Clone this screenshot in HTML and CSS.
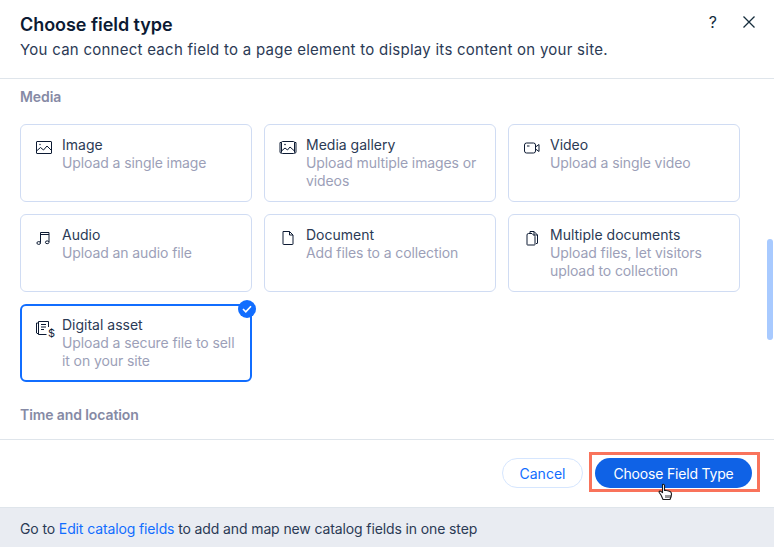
FILE: index.html
```html
<!DOCTYPE html>
<html lang="en">
<head>
<meta charset="utf-8">
<title>Choose field type</title>
<link rel="stylesheet" href="styles.css">
</head>
<body>
<div class="dialog">
  <header class="head">
    <div class="head-text">
      <h1>Choose field type</h1>
      <p>You can connect each field to a page element to display its content on your site.</p>
    </div>
    <div class="head-actions">
      <span class="help">?</span>
      <svg class="close" width="14" height="14" viewBox="0 0 14 14"><path d="M1.5 1.5l11 11M12.5 1.5l-11 11" fill="none" stroke="#162d3d" stroke-width="1.3"/></svg>
    </div>
  </header>
  <main class="body">
    <h2 class="section first">Media</h2>
    <div class="grid">
      <div class="card">
        <svg class="ico" width="18" height="18" viewBox="0 0 18 18" fill="none" stroke="#0c1a33"><rect x="1.5" y="2.5" width="15" height="12" rx=".5"/><path d="M1.5 12l4-3.5 3 2.5 3.5-4 4.500 4.500"/><circle cx="5" cy="5.500" r=".7" fill="#0c1a33" stroke="none"/></svg>
        <div><div class="name">Image</div><div class="desc">Upload a single image</div></div>
      </div>
      <div class="card">
        <svg class="ico" width="18" height="18" viewBox="0 0 18 18" fill="none" stroke="#0c1a33"><path d="M2.500 3.500H1v10l1.500 1M15.500 3.500H17v10l-1.500 1"/><rect x="2.500" y="2.500" width="13" height="12" rx="1"/><path d="M2.500 12l3.500-3 2.500 2 2.500-3 4.500 4"/><circle cx="6" cy="5.500" r=".8" fill="#0c1a33" stroke="none"/></svg>
        <div><div class="name">Media gallery</div><div class="desc">Upload multiple images or videos</div></div>
      </div>
      <div class="card">
        <svg class="ico" width="18" height="18" viewBox="0 0 18 18" fill="none" stroke="#0c1a33"><rect x="1.500" y="4" width="11" height="10" rx="2"/><path d="M12.500 8l3.500-2.500v7L12.500 10M4 7h2.500"/></svg>
        <div><div class="name">Video</div><div class="desc">Upload a single video</div></div>
      </div>
      <div class="card">
        <svg class="ico" width="18" height="18" viewBox="0 0 18 18" fill="none" stroke="#0c1a33"><path d="M5.500 13.500V3.500h8.500v9.500M5.500 5.500H14"/><ellipse cx="3.700" cy="14" rx="1.800" ry="1.400"/><ellipse cx="12.200" cy="13.300" rx="1.800" ry="1.400"/></svg>
        <div><div class="name">Audio</div><div class="desc">Upload an audio file</div></div>
      </div>
      <div class="card">
        <svg class="ico" width="18" height="18" viewBox="0 0 18 18" fill="none" stroke="#0c1a33"><path d="M4 2.500h6.500l3.500 3.500v9a.5.500 0 0 1-.5.500h-9A.5.500 0 0 1 4 15zM10.500 2.500V6H14"/></svg>
        <div><div class="name">Document</div><div class="desc">Add files to a collection</div></div>
      </div>
      <div class="card">
        <svg class="ico" width="18" height="18" viewBox="0 0 18 18" fill="none" stroke="#0c1a33"><path d="M7 4.500V2.500h4l3.500 3.500v8a.5.500 0 0 1-.5.500h-1M11 2.500V6h3.500"/><path d="M4 6a1.500 1.500 0 0 1 1.500-1.500H9l3 3v8a.5.500 0 0 1-.5.500h-7a.5.500 0 0 1-.5-.5z"/></svg>
        <div><div class="name">Multiple documents</div><div class="desc">Upload files, let visitors upload to collection</div></div>
      </div>
      <div class="card selected">
        <svg class="ico" width="18" height="18" viewBox="0 0 18 18" fill="none" stroke="#0c1a33"><path d="M3.500 4H1.500v10l2 1"/><path d="M13.500 8V2.500h-10V15.500h8"/><path d="M6 5.500h5M6 8h5M6 10.500h3"/></svg>
        <span class="dollar">$</span>
        <div><div class="name">Digital asset</div><div class="desc">Upload a secure file to sell it on your site</div></div>
        <span class="check"><svg width="10" height="8" viewBox="0 0 10 8"><path d="M1 4l2.800 2.800L9 1.200" fill="none" stroke="#fff" stroke-width="1.600"/></svg></span>
      </div>
    </div>
    <h2 class="section">Time and location</h2>
    <span class="scrollbar"></span>
  </main>
  <footer class="foot">
    <button class="btn secondary">Cancel</button>
    <span class="highlight"><button class="btn primary">Choose Field Type</button></span>
    <svg class="cursor" width="17" height="19" viewBox="0 0 17 19"><path d="M4.500 1.500c1-.6 2 0 2 1v5l1-.3 1 .3 1 .2 1 .3 1.500.5c1 .5 1.500 1 1.500 2.500 0 2-.5 3.500-1.500 5.500h-7L3 12 1.200 9.500c-.4-1 .6-1.800 1.600-1.200l1.700 1.400z" fill="#fff" stroke="#1a1a1a" stroke-width="1.100" stroke-linejoin="round"/><path d="M8 12v3M10 12v3M12 12v3" stroke="#1a1a1a" stroke-width=".9"/></svg>
  </footer>
  <div class="notice">Go to <a href="#">Edit catalog fields</a> to add and map new catalog fields in one step</div>
</div>
</body>
</html>
```

FILE: styles.css
```css
* { box-sizing: border-box; }
html, body { margin: 0; height: 100%; }
body { background: #fff; font-family: "Inter", "Liberation Sans", sans-serif; color: #0c1a33; overflow: hidden; }
.dialog { width: 774px; height: 547px; display: flex; flex-direction: column; }
.head { height: 79px; flex: none; border-bottom: 1px solid #dfe5eb; padding: 13px 18px 0 20px; display: flex; justify-content: space-between; }
.head h1 { margin: 0; font-size: 18px; line-height: 24px; font-weight: 600; color: #0c1a33; letter-spacing: -.05px; }
.head p { margin: 3px 0 0; font-size: 15px; line-height: 20px; color: #2b3a55; letter-spacing: .26px; }
.head-actions { display: flex; align-items: flex-start; gap: 25px; }
.help { font-size: 16px; line-height: 18px; color: #162d3d; }
.close { margin-top: 2px; }
.body { flex: 1; min-height: 0; overflow: hidden; position: relative; padding: 0 34px 0 20px; }
.section { margin: 0; font-size: 14px; line-height: 18px; font-weight: 600; color: #868aa5; padding-top: 24px; letter-spacing: -.1px; }
.section.first { padding-top: 9px; }
.grid { display: grid; grid-template-columns: repeat(3, 232px); grid-auto-rows: 78px; gap: 12px; margin-top: 18px; }
.card { position: relative; border: 1px solid #d0dcf3; border-radius: 6px; padding: 11px 12px 0 14px; display: flex; gap: 9px; align-items: flex-start; }
.card .ico { flex: none; margin-top: 3px; }
.name { font-size: 14px; line-height: 18px; color: #2b3a55; }
.desc { font-size: 14px; line-height: 18px; color: #9c9fb8; letter-spacing: -.1px; }
.selected { border: 2px solid #116dff; padding: 10px 11px 0 13px; }
.dollar { position: absolute; left: 25px; top: 21px; font-size: 11px; line-height: 12px; background: #fff; padding-left: 1px; color: #0c1a33; }
.check { position: absolute; top: -6px; right: -6px; width: 18px; height: 18px; border-radius: 50%; background: #116dff; display: flex; align-items: center; justify-content: center; }
.scrollbar { position: absolute; right: 1px; top: 160px; width: 6px; height: 101px; border-radius: 3px; background: #a8caff; }
.foot { height: 68px; flex: none; border-top: 1px solid #dfe5eb; padding: 12px 14px 0 0; display: flex; justify-content: flex-end; align-items: flex-start; gap: 6px; position: relative; }
.btn { height: 30px; border-radius: 15px; font-family: inherit; font-size: 14px; cursor: pointer; padding: 0; }
.secondary { width: 81px; margin-top: 6px; background: #fff; border: 1px solid #d6e6fe; color: #116dff; }
.primary { width: 157px; background: #0f62e6; border: 0; color: #fff; letter-spacing: -.18px; }
.highlight { border: 3px solid #f9735b; padding: 3px 5px 1px 3px; display: flex; }
.cursor { position: absolute; left: 658px; top: 43px; }
.notice { height: 40px; flex: none; background: #e9ecf2; border-top: 1px solid #dfe5eb; padding: 11px 0 0 20px; font-size: 14px; line-height: 20px; color: #2b3a55; letter-spacing: -.12px; }
.notice a { color: #116dff; text-decoration: none; }
```
